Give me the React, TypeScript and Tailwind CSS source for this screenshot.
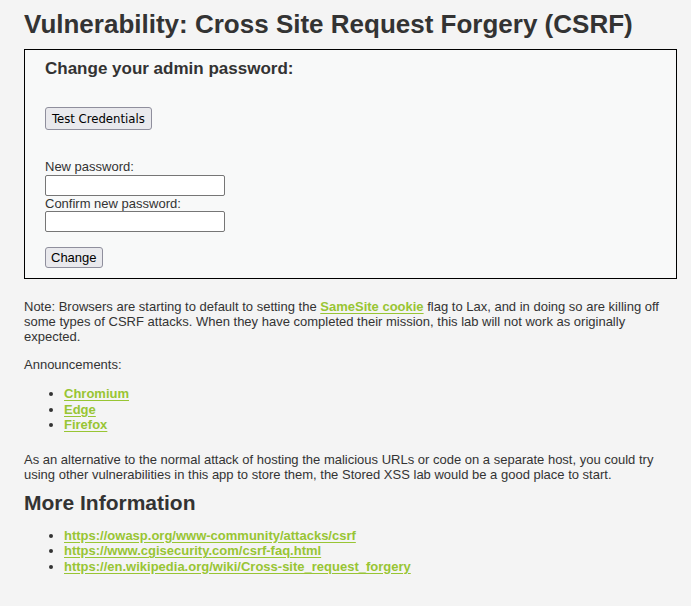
import React from 'react'

const links = [
  'https://owasp.org/www-community/attacks/csrf',
  'https://www.cgisecurity.com/csrf-faq.html',
  'https://en.wikipedia.org/wiki/Cross-site_request_forgery',
]

function Link({ children }: { children: React.ReactNode }) {
  return (
    <a href="#" className="font-bold text-[#98c533] underline underline-offset-[2px]">
      {children}
    </a>
  )
}

export default function App() {
  return (
    <div className="min-h-[606px] bg-[#f4f4f4] pl-[24px] pr-[14px] pt-[9px] font-['Liberation_Sans',Arial,sans-serif] text-[13px] leading-[15px] text-[#333333]">
      <h1 className="text-[26px] font-bold leading-[30px]">
        Vulnerability: Cross Site Request Forgery (CSRF)
      </h1>

      {/* Vulnerable code area */}
      <div className="mt-[10px] border border-[#000000] bg-[#f8f9f9] px-[20px] pt-[9px] pb-[10px]">
        <h3 className="text-[17px] font-bold leading-[19px]">Change your admin password:</h3>
        <div className="mt-[29px]">
          <button className="h-[23px] rounded-[3px] border border-[#8f8f9d] bg-[#e9e9ed] px-[6px] font-['DejaVu_Sans_Condensed','DejaVu_Sans',sans-serif] text-[13px] font-stretch-condensed leading-[15px] text-black">
            Test Credentials
          </button>
        </div>
        <form className="mt-[29px] flex flex-col items-start">
          <span className="leading-[16px]">New password:</span>
          <input
            type="password"
            className="h-[21px] w-[180px] rounded-[2px] border border-[#767676] bg-white"
          />
          <span className="leading-[15px]">Confirm new password:</span>
          <input
            type="password"
            className="h-[21px] w-[180px] rounded-[2px] border border-[#767676] bg-white"
          />
          <button
            type="button"
            className="mt-[15px] h-[21px] rounded-[3px] border border-[#8f8f9d] bg-[#e9e9ed] px-[5px] text-[13px] leading-[15px] text-black"
          >
            Change
          </button>
        </form>
      </div>

      <p className="mt-[20px]">
        Note: Browsers are starting to default to setting the <Link>SameSite cookie</Link> flag to Lax, and in
        doing so are killing off some types of CSRF attacks. When they have completed their mission, this lab
        will not work as originally expected.
      </p>
      <p className="mt-[13px]">Announcements:</p>
      <ul className="mt-[14px] list-disc pl-[40px] leading-[15.5px]">
        <li>
          <Link>Chromium</Link>
        </li>
        <li>
          <Link>Edge</Link>
        </li>
        <li>
          <Link>Firefox</Link>
        </li>
      </ul>
      <p className="mt-[19px]">
        As an alternative to the normal attack of hosting the malicious URLs or code on a separate host, you
        could try using other vulnerabilities in this app to store them, the Stored XSS lab would be a good
        place to start.
      </p>
      <h2 className="mt-[9px] text-[21px] font-bold leading-[24px]">More Information</h2>
      <ul className="mt-[13px] list-disc pl-[40px] leading-[15.5px]">
        {links.map((l) => (
          <li key={l}>
            <Link>{l}</Link>
          </li>
        ))}
      </ul>
    </div>
  )
}
